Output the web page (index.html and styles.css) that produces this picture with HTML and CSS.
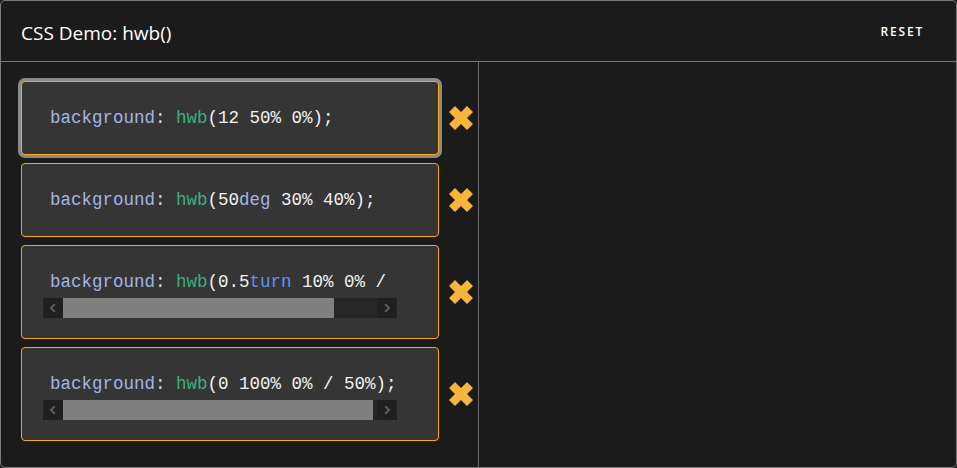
FILE: index.html
```html
<!DOCTYPE html>
<html lang="en">
<head>
    <meta charset="UTF-8">
    <meta name="viewport" content="width=device-width, initial-scale=1.0">
    <title>CSS Demo: hwb()</title>
    <link rel="stylesheet" href="styles.css">
</head>
<body>
    <div class="demo">
        <header class="demo-header">
            <h1>CSS Demo: hwb()</h1>
            <button class="reset">Reset</button>
        </header>

        <div class="demo-body">
            <div class="choices">
                <div class="choice">
                    <div class="card selected">
                        <pre class="code"><span class="prop">background</span><span class="punct">:</span> <span class="fn">hwb</span>(12 50% 0%);</pre>
                    </div>
                    <svg class="mark" viewBox="0 0 24 24"><path d="M6 0 L12 6 L18 0 L24 6 L18 12 L24 18 L18 24 L12 18 L6 24 L0 18 L6 12 L0 6 Z"/></svg>
                </div>

                <div class="choice">
                    <div class="card">
                        <pre class="code"><span class="prop">background</span><span class="punct">:</span> <span class="fn">hwb</span>(50<span class="unit">deg</span> 30% 40%);</pre>
                    </div>
                    <svg class="mark" viewBox="0 0 24 24"><path d="M6 0 L12 6 L18 0 L24 6 L18 12 L24 18 L18 24 L12 18 L6 24 L0 18 L6 12 L0 6 Z"/></svg>
                </div>

                <div class="choice">
                    <div class="card">
                        <pre class="code"><span class="prop">background</span><span class="punct">:</span> <span class="fn">hwb</span>(0.5<span class="kw">turn</span> 10% 0% / 50%);</pre>
                        <div class="scrollbar">
                            <span class="arrow"><svg viewBox="0 0 6 8"><path d="M5 0 L1 4 L5 8"/></svg></span>
                            <span class="track"><span class="thumb" style="width: 86.3%"></span></span>
                            <span class="arrow"><svg viewBox="0 0 6 8"><path d="M1 0 L5 4 L1 8"/></svg></span>
                        </div>
                    </div>
                    <svg class="mark" viewBox="0 0 24 24"><path d="M6 0 L12 6 L18 0 L24 6 L18 12 L24 18 L18 24 L12 18 L6 24 L0 18 L6 12 L0 6 Z"/></svg>
                </div>

                <div class="choice">
                    <div class="card">
                        <pre class="code"><span class="prop">background</span><span class="punct">:</span> <span class="fn">hwb</span>(0 100% 0% / 50%);</pre>
                        <div class="scrollbar">
                            <span class="arrow"><svg viewBox="0 0 6 8"><path d="M5 0 L1 4 L5 8"/></svg></span>
                            <span class="track"><span class="thumb" style="width: 98.7%"></span></span>
                            <span class="arrow"><svg viewBox="0 0 6 8"><path d="M1 0 L5 4 L1 8"/></svg></span>
                        </div>
                    </div>
                    <svg class="mark" viewBox="0 0 24 24"><path d="M6 0 L12 6 L18 0 L24 6 L18 12 L24 18 L18 24 L12 18 L6 24 L0 18 L6 12 L0 6 Z"/></svg>
                </div>
            </div>

            <div class="output"></div>
        </div>
    </div>
</body>
</html>
```

FILE: styles.css
```css
html, body {
    margin: 0;
    padding: 0;
    background-color: #1b1b1b;
}
.demo {
    box-sizing: border-box;
    height: 468px;
    border: 1px solid #7a7a7a;
    border-radius: 5px;
    background-color: #1b1b1b;
    color: white;
    font-family: "Open Sans", Arial, sans-serif;
    display: flex;
    flex-direction: column;
}
.demo-header {
    height: 60px;
    border-bottom: 1px solid #777;
    display: flex;
    align-items: center;
    justify-content: space-between;
    padding: 0 20px;
}
.demo-header h1 {
    margin: 0;
    font-size: 19px;
    font-weight: 400;
    padding-top: 3px;
}
.reset {
    background: none;
    border: none;
    color: white;
    font-family: "Open Sans", Arial, sans-serif;
    font-size: 12px;
    font-weight: 600;
    letter-spacing: 1.8px;
    text-transform: uppercase;
    padding: 0 12px;
    cursor: pointer;
}
.demo-body {
    flex: 1;
    display: flex;
}
.choices {
    box-sizing: border-box;
    width: 478px;
    border-right: 1px solid #6e6e6e;
    padding: 19px 0 0 20px;
    display: flex;
    flex-direction: column;
    gap: 8px;
}
.choice {
    display: flex;
    align-items: center;
    gap: 10px;
}
.card {
    box-sizing: border-box;
    width: 418px;
    border: 1px solid #f7ac0a;
    border-radius: 4px;
    background-color: #353535;
    padding: 20px 20px 20px 21px;
}
.card.selected {
    box-shadow: 0 0 0 3px #8a8a8a;
}
.code {
    box-sizing: border-box;
    width: 354px;
    margin: 0;
    padding: 6px 7px;
    font-family: "Liberation Mono", "Courier New", monospace;
    font-size: 17.5px;
    line-height: 20px;
    white-space: pre;
    overflow: hidden;
    color: #f2f2f2;
}
.prop, .unit {
    color: #a2b6e2;
}
.punct {
    color: #d8d8d8;
}
.fn {
    color: #3caf7d;
}
.kw {
    color: #5c92ee;
}
.scrollbar {
    width: 354px;
    height: 20px;
    display: flex;
    background-color: #262626;
}
.arrow {
    width: 20px;
    height: 20px;
    background-color: #202020;
    display: flex;
    align-items: center;
    justify-content: center;
}
.arrow svg {
    width: 6px;
    height: 8px;
    fill: none;
    stroke: #5c5c5c;
    stroke-width: 2;
}
.track {
    flex: 1;
    display: flex;
}
.thumb {
    height: 20px;
    background-color: #7f7f7f;
}
.mark {
    width: 24px;
    height: 24px;
    fill: #f7b63b;
}
.output {
    flex: 1;
}
```
